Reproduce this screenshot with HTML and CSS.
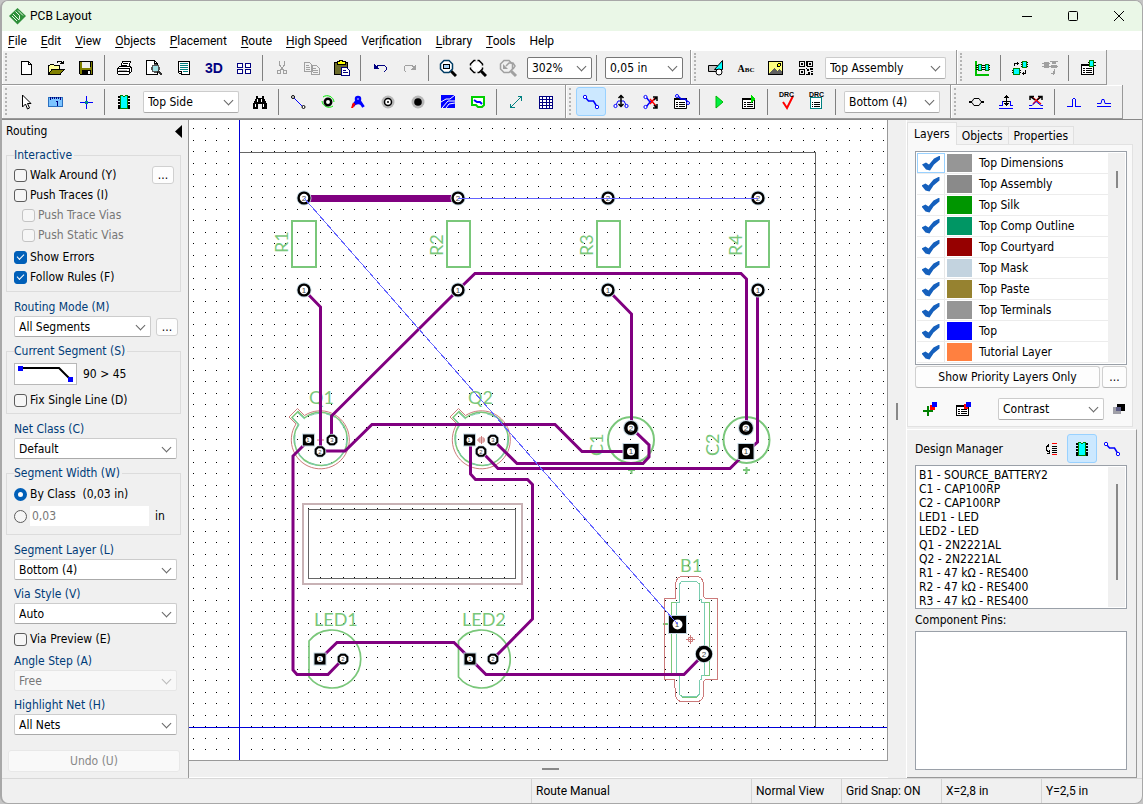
FILE: index.html
```html
<!DOCTYPE html>
<html lang="en">
<head>
<meta charset="utf-8">
<title>PCB Layout</title>
<link rel="stylesheet" href="styles.css">
</head>
<body>
<svg class="defs" aria-hidden="true">
  <symbol id="i-chip" viewBox="0 0 16 16"><path d="M2 2.500h12M2 5.500h12M2 8.500h12M2 11.500h12M2 13.500h12" stroke="#000" stroke-width="2"/><path d="M4.500 1.500h2l1 1h1l1-1h2v13h-7z" fill="#0ff" stroke="#008000"/></symbol>
  <symbol id="i-route" viewBox="0 0 16 16"><path d="M2.500 3.500l3 3.500h5l3 5" fill="none" stroke="#00f" stroke-width="1.500"/><circle cx="2" cy="3" r="1.700" fill="#fff" stroke="#00f"/><circle cx="14" cy="13" r="1.700" fill="#fff" stroke="#00f"/></symbol>
  <symbol id="i-list" viewBox="0 0 16 16"><path d="M1.500 4.500h12v10h-12z" fill="#fff" stroke="#000"/><path d="M1 5h13" stroke="#000" stroke-width="2"/><path d="M3 8.500h2m1 0h6M3 10.500h2m1 0h6M3 12.500h2m1 0h6" stroke="#000"/></symbol>
  <symbol id="i-lens" viewBox="0 0 18 18"><path d="M12 12l5 5" stroke="#000" stroke-width="3"/><path d="M5 1.500h5l3.500 3.500v5L10 13.500H5L1.500 10V5z" fill="#fff" stroke="currentColor" stroke-width="1.500"/></symbol>
</svg>
<div class="window">
  <header class="titlebar">
    <svg class="logo" width="17" height="17" viewBox="0 0 17 17"><path d="M8.500 0L17 8l-8.500 8.500L0 8z" fill="#2f8f3a"/><path d="M4 6l6 6M6.500 3.500l4 4 0 4M9 2.500l5 5M3 8l5 5" stroke="#e8f7e5" fill="none"/></svg>
    <h1>PCB Layout</h1>
    <div class="winbtns">
      <button aria-label="Minimize"><svg width="12" height="12"><path d="M1 6.500h10" stroke="#000"/></svg></button>
      <button aria-label="Maximize"><svg width="12" height="12"><rect x="1.500" y="1.500" width="9" height="9" rx="1" fill="none" stroke="#000"/></svg></button>
      <button aria-label="Close"><svg width="12" height="12"><path d="M1 1l10 10M11 1L1 11" stroke="#000"/></svg></button>
    </div>
  </header>
  <nav class="menu">
    <button><u>F</u>ile</button><button><u>E</u>dit</button><button><u>V</u>iew</button><button><u>O</u>bjects</button><button><u>P</u>lacement</button><button><u>R</u>oute</button><button><u>H</u>igh Speed</button><button>Ver<u>i</u>fication</button><button><u>L</u>ibrary</button><button><u>T</u>ools</button><button>Help</button>
  </nav>

  <div class="toolrow first">
    <div class="band">
      <button aria-label="New"><svg class="ic" viewBox="0 0 16 16"><path d="M3.500 1.500h7l3 3v10h-10z" fill="#fff" stroke="#000"/><path d="M10.500 1.500v3h3" fill="none" stroke="#000"/></svg></button>
      <button aria-label="Open"><svg class="ic" viewBox="0 0 16 16"><path d="M.5 14V5.500h1l1-1h3l1 1h5V9" fill="#ffff9c" stroke="#000"/><path d="M.5 14.500l3.500-5h12l-4 5z" fill="#808000" stroke="#000"/><path d="M9 2.500l1-1h3l2 2m0-3v3h-3" fill="none" stroke="#000"/></svg></button>
      <button aria-label="Save"><svg class="ic" viewBox="0 0 16 16"><path d="M1.500 1.500h13v13h-12l-1-1z" fill="#808000" stroke="#000"/><path d="M4 2h8v6H4z" fill="#f0f0f0"/><path d="M4 10h9v5H4z" fill="#000"/><path d="M10 11h2v3h-2z" fill="#f0f0f0"/><path d="M12.500 2v5" stroke="#000"/></svg></button>
      <i class="sep"></i>
      <button aria-label="Print"><svg class="ic" viewBox="0 0 16 16"><path d="M4.500 7.500l2-6h8l-2 6" fill="#fff" stroke="#000"/><path d="M7 3.500h5M6 5.500h5" stroke="#000"/><path d="M1.500 8.500l2-2h11l1 1v4l-3 3h-10l-1-1z" fill="#fff" stroke="#000"/><path d="M2 8.500h11v5M2 11.500h11M13 9l2-2" fill="none" stroke="#000"/><path d="M3 10.500h8" stroke="#aaa"/></svg></button>
      <button aria-label="Preview"><svg class="ic" viewBox="0 0 16 16"><path d="M.5.5h8l3 3v11H.5z" fill="#fff" stroke="#000"/><path d="M8.500.5v3h3" fill="none" stroke="#000"/><circle cx="9.500" cy="8.500" r="3.500" fill="#9fe0e4" stroke="#555" stroke-width="1.500"/><path d="M12 11l4 4" stroke="#333" stroke-width="2.500"/></svg></button>
      <button aria-label="Report"><svg class="ic" viewBox="0 0 16 16"><path d="M2.500 1.500h11v13h-8l-3-2z" fill="#fff" stroke="#000"/><path d="M4 3.500h8M4 5.500h8M4 7.500h8M4 9.500h8M7 11.500h5" stroke="#008080"/><path d="M2.500 11.500h3v3" fill="none" stroke="#000"/></svg></button>
      <button class="b3d">3D</button>
      <button aria-label="Tile"><svg class="ic" viewBox="0 0 16 16"><path d="M1.500 3.500h5v4h-5zM9.500 3.500h5v4h-5zM1.500 9.500h5v4h-5zM9.500 9.500h5v4h-5z" fill="#fff" stroke="#000080"/></svg></button>
      <i class="sep"></i>
      <button aria-label="Cut"><svg class="ic" viewBox="0 0 16 16"><path d="M5.500 1v4l4 5M10.500 1v4l-4 5" fill="none" stroke="#a0a0a0"/><circle cx="5" cy="12" r="2" fill="none" stroke="#a0a0a0"/><circle cx="11" cy="12" r="2" fill="none" stroke="#a0a0a0"/></svg></button>
      <button aria-label="Copy"><svg class="ic" viewBox="0 0 16 16"><path d="M.5 2.500h5l3 3v6h-8zM7.500 5.500h5l3 3v6h-8zM2 5.500h3M2 7.500h4M2 9.500h4M9 8.500h3M9 10.500h5M9 12.500h5" fill="none" stroke="#a0a0a0"/></svg></button>
      <button aria-label="Paste"><svg class="ic" viewBox="0 0 16 16"><path d="M.5 2.500h13v12H.5z" fill="#6b6b2a" stroke="#000"/><path d="M3 1.500h2L6 .5h2l1 1h2v3H3z" fill="#ff0" stroke="#000"/><path d="M7.500 7.500h5l3 3v5h-8z" fill="#fff" stroke="#000080"/><path d="M9 10.500h3M9 12.500h5" stroke="#000080"/></svg></button>
      <i class="sep"></i>
      <button aria-label="Undo"><svg class="ic" viewBox="0 0 16 16"><path d="M4 7l3-2h5l2 2v3l-2 2" fill="none" stroke="#000080"/><path d="M2 4v5h5z" fill="#000080"/></svg></button>
      <button aria-label="Redo"><svg class="ic" viewBox="0 0 16 16"><path d="M12 7L9 5H4L2 7v3l2 2" fill="none" stroke="#a0a0a0"/><path d="M14 4v6H8z" fill="#a0a0a0"/></svg></button>
      <i class="sep"></i>
      <button aria-label="Zoom window"><svg class="ic big smooth navy"><use href="#i-lens"/><rect x="4.500" y="5.500" width="6" height="4" fill="#a8d4f8" stroke="#000"/></svg></button>
      <button aria-label="Zoom all"><svg class="ic big smooth"><use href="#i-lens"/><path d="M7.500 0v16M0 7.500h15" stroke="#f0f0f0" stroke-width="2"/><path d="M4 4h7v7H4z" fill="#fff"/></svg></button>
      <button aria-label="Zoom previous"><svg class="ic big smooth" viewBox="0 0 18 18"><path d="M5 1.500h5l3.500 3.500v5L10 13.500H5L1.500 10V5z" fill="none" stroke="#a0a0a0" stroke-width="1.500"/><path d="M12 12l5 5" stroke="#a0a0a0" stroke-width="3"/><path d="M7 7l3-3h4l2 3-2 3" fill="none" stroke="#a0a0a0" stroke-width="1.500"/><path d="M4 5v5h5z" fill="#a0a0a0"/></svg></button>
      <span class="combo strong w64"><select aria-label="Zoom"><option>302%</option></select></span>
      <i class="sep"></i>
      <span class="combo strong w78"><select aria-label="Grid size"><option>0,05 in</option></select></span>
    </div>
    <div class="band">
      <button aria-label="Shapes"><svg class="ic smooth" viewBox="0 0 16 16"><path d="M.5 5.500h9v6h-9z" fill="#c0c0c0" stroke="#000"/><path d="M14.500.5v9h-8z" fill="#0ff" stroke="#000"/><circle cx="11" cy="12" r="3" fill="#fff" stroke="#000"/></svg></button>
      <button class="babc">Abc</button>
      <button aria-label="Picture"><svg class="ic" viewBox="0 0 16 16"><path d="M.5 1.500h14v13H.5z" fill="#ffff80" stroke="#000"/><path d="M1 13l5-5 3 3 2-2 3 3v2H1z" fill="#606060"/><circle cx="11" cy="5" r="1.500" fill="#ff0" stroke="#000"/></svg></button>
      <button aria-label="QR code"><svg class="ic" viewBox="0 0 16 16"><path d="M1.500 1.500h5v5h-5zM9.500 1.500h5v5h-5zM1.500 9.500h5v5h-5z" fill="none" stroke="#000"/><path d="M3 3h2v2H3zM11 3h2v2h-2zM3 11h2v2H3zM8 1h1v5H8zM9 9h2v2H9zM12 8h3v2h-3zM10 12h2v3h-2zM13 11h2v1h-2zM13 13h2v2h-2zM8 8h1v1H8zM8 14h2v1H8z"/></svg></button>
      <span class="combo w122"><select aria-label="Drawing layer"><option>Top Assembly</option></select></span>
    </div>
    <div class="band">
      <button aria-label="Align"><svg class="ic" viewBox="0 0 16 16"><path d="M1.500 1v13.500H15" fill="none" stroke="#00c000" stroke-width="2"/><path d="M2 5.500h14M2 7.500h14M2 9.500h14" stroke="#000"/><path d="M4.500 4.500h3v6h-3zM11.500 4.500h3v6h-3z" fill="#0ff" stroke="#008000"/></svg></button>
      <i class="sep"></i>
      <button aria-label="Auto place"><svg class="ic" viewBox="0 0 16 16"><path d="M0 10.500h9M0 12.500h9M9 2.500h7M9 4.500h7M9 6.500h7" stroke="#000"/><path d="M1.500 8.500h6v6h-6zM10.500 1.500h4v6h-4z" fill="#0ff" stroke="#008000"/><path d="M2.500 6V3.500h4M5.500 2v3M13.500 10v3H10M11 11.500v3" fill="none" stroke="#000"/></svg></button>
      <button aria-label="Unplace"><svg class="ic" viewBox="0 0 16 16"><path d="M2 2h5v6H2zM10 1h4v3h-4zM9 5h6v3H9z" fill="#a0a0a0"/><path d="M0 3.500h8M0 6.500h16M8 1.500h8M12.500 9v4H9M11 11v4" fill="none" stroke="#a0a0a0"/></svg></button>
      <i class="sep"></i>
      <button aria-label="Component list"><svg class="ic"><use href="#i-list"/><path d="M8 2.500h8M8 5.500h8" stroke="#000"/><path d="M9.500.5h4v6h-4z" fill="#0ff" stroke="#008000"/></svg></button>
    </div>
  </div>

  <div class="toolrow">
    <div class="band">
      <button aria-label="Select"><svg class="ic smooth" viewBox="0 0 16 16"><path d="M4.500 1v12l3-3 2 5 2-1-2-4.500h3.500z" fill="#fff" stroke="#000"/></svg></button>
      <button aria-label="Measure"><svg class="ic" viewBox="0 0 16 16"><path d="M.5 3.500h14v9H.5z" fill="#7cc4ff" stroke="#2a6fc0"/><path d="M2.500 3v3M4.500 3v2M6.500 3v2M8.500 3v2M10.500 3v2M12.500 3v3M8 7.500h1.500V12" fill="none" stroke="#000080"/></svg></button>
      <button aria-label="Origin"><svg class="ic" viewBox="0 0 16 16"><path d="M8.500 2v13M2 8.500h13" stroke="#00f"/><path d="M7 7h3v3H7z" fill="#088"/></svg></button>
      <i class="sep"></i>
      <button aria-label="Place component"><svg class="ic"><use href="#i-chip"/></svg></button>
      <span class="combo w96 tight"><select aria-label="Board side"><option>Top Side</option></select></span>
      <button aria-label="Find"><svg class="ic" viewBox="0 0 16 16"><path d="M4 2h2v2h4V2h2v2l3 6v5h-5v-5H6v5H1v-5l3-6z"/><path d="M5.500 5v3M9.500 5v3M3 9.500v3M11.500 9.500v3" stroke="#fff"/></svg></button>
      <i class="sep"></i>
      <button aria-label="Ratline"><svg class="ic smooth" viewBox="0 0 16 16"><path d="M3 3l10 10" stroke="#00f"/><circle cx="3" cy="3" r="1.500" fill="#fff" stroke="#000"/><circle cx="13.500" cy="13" r="1.500" fill="#fff" stroke="#000"/></svg></button>
      <button aria-label="Via"><svg class="ic smooth" viewBox="0 0 16 16"><path d="M3 3a7 7 0 0 1 11 5M13 12a7 7 0 0 1-11-5" fill="none" stroke="#0e0"/><circle cx="8" cy="8" r="3.200" fill="#fff" stroke="#000" stroke-width="2.500"/></svg></button>
      <button aria-label="Arc"><svg class="ic smooth" viewBox="0 0 16 16"><path d="M3 12L6.500 7M9.500 7l4 6M4.500 10c3-2 5-2 7 0" fill="none" stroke="#00f" stroke-width="3"/><circle cx="8" cy="5" r="2" fill="#fff" stroke="#00f" stroke-width="2.500"/><path d="M3 8.500l2.500 1.500L3 14H1z" fill="#f00"/></svg></button>
      <button aria-label="Pad"><svg class="ic smooth" viewBox="0 0 16 16"><circle cx="8" cy="8" r="6.500" fill="#b8b8b8"/><circle cx="8" cy="8" r="3.500" fill="#fff" stroke="#000" stroke-width="1.500"/><circle cx="8" cy="8" r="1"/></svg></button>
      <button aria-label="Mounting hole"><svg class="ic smooth" viewBox="0 0 16 16"><circle cx="8" cy="8" r="6.500" fill="#b8b8b8"/><circle cx="8" cy="8" r="3.800"/></svg></button>
      <button aria-label="Copper pour"><svg class="ic smooth" viewBox="0 0 16 16"><path d="M1 1h14v13H1z" fill="#00f"/><path d="M1 8l5-3h4l5-4M2 14l6-7h7M6 14l3-4 6-1" fill="none" stroke="#fff"/></svg></button>
      <button aria-label="Net region"><svg class="ic smooth" viewBox="0 0 16 16"><path d="M2 3h12v8l-2 2H8l-2-2H2z" fill="#fff" stroke="#00d000" stroke-width="2"/><path d="M4 6l3 2h3l2 2" stroke="#00f" stroke-width="2" fill="none"/></svg></button>
      <i class="sep"></i>
      <button aria-label="Dimension"><svg class="ic" viewBox="0 0 16 16"><path d="M2 14L14 2M2.500 10v3.500h4M10 2.500h3.500v4" fill="none" stroke="#008080"/></svg></button>
      <button aria-label="Table"><svg class="ic" viewBox="0 0 16 16"><path d="M1.500 2.500h13v12h-13zM1.500 5.500h13M1.500 8.500h13M1.500 11.500h13M4.500 2v12M8.500 2v12M11.500 2v12" fill="#fff" stroke="#000080"/></svg></button>
    </div>
    <div class="band">
      <button class="on" aria-label="Route manual"><svg class="ic smooth"><use href="#i-route"/></svg></button>
      <button aria-label="Edit traces"><svg class="ic smooth" viewBox="0 0 16 16"><path d="M3 11l2-4h6l2 4" fill="none" stroke="#00f"/><path d="M8 1v12M5.500 4L8 1.500 10.500 4M5.500 10L8 12.500l2.500-2.500" fill="none" stroke="#000" stroke-width="1.500"/><circle cx="2.500" cy="12" r="1.600" fill="#fff" stroke="#00f"/><circle cx="13.500" cy="12" r="1.600" fill="#fff" stroke="#00f"/></svg></button>
      <button aria-label="Free edit"><svg class="ic smooth" viewBox="0 0 16 16"><path d="M3 3l4 5h3M3 13l5-6" fill="none" stroke="#00f" stroke-width="1.500"/><path d="M7 5l6 7M12 4L7 10" stroke="#f00" stroke-width="1.500"/><path d="M10 3h4v4M14 10v4h-4M14 3l-3 3M14 14l-3-3" fill="none" stroke="#000" stroke-width="1.500"/><circle cx="2.500" cy="3" r="1.600" fill="#fff" stroke="#00f"/><circle cx="2.500" cy="13" r="1.600" fill="#fff" stroke="#00f"/></svg></button>
      <button aria-label="Net list"><svg class="ic smooth"><use href="#i-list"/><path d="M5 2l3 3h4l3 3" stroke="#00f" stroke-width="1.500" fill="none"/><circle cx="4" cy="2" r="1.500" fill="#fff" stroke="#00f"/><circle cx="15" cy="9" r="1.500" fill="#fff" stroke="#00f"/></svg></button>
      <i class="sep"></i>
      <button aria-label="Run autorouter"><svg class="ic smooth" viewBox="0 0 16 16"><path d="M5 2l7 6-7 6z" fill="#0e4" stroke="#0b0"/></svg></button>
      <button aria-label="Autorouter setup"><svg class="ic"><use href="#i-list"/><path d="M10 1l5 4-5 4z" fill="#0d0"/></svg></button>
      <i class="sep"></i>
      <button class="drc" aria-label="Check DRC"><span>DRC</span><svg class="ic smooth" viewBox="0 0 16 16"><path d="M4 8l4 6 6-12" fill="none" stroke="#f00" stroke-width="2"/></svg></button>
      <button class="drc" aria-label="DRC report"><span>DRC</span><svg class="ic" viewBox="0 0 16 16"><path d="M1.500 3.500h11v11h-11z" fill="#fff" stroke="#008080"/><path d="M3 8.500h1m1 0h6M3 10.500h1m1 0h6M3 12.500h1m1 0h6" stroke="#000"/></svg></button>
      <i class="sep"></i>
      <span class="combo w96"><select aria-label="Active layer"><option>Bottom (4)</option></select></span>
    </div>
    <div class="band">
      <button aria-label="Differential pair"><svg class="ic smooth" viewBox="0 0 16 16"><path d="M1 7.500h3l2-3h5l2 3h3M1 8.500h3l2 3h5l2-3h3" fill="none" stroke="#000"/></svg></button>
      <button aria-label="Tune"><svg class="ic" viewBox="0 0 16 16"><path d="M8.500 2v8M4 7.500h9" fill="none" stroke="#000"/><path d="M8.500 1l3 3h-6zM8.500 12l3-3h-6z"/><path d="M1 11.500h3.500v-5M12.500 6.500v5H15M1 14.500h14" fill="none" stroke="#00f"/></svg></button>
      <button aria-label="Free tune"><svg class="ic smooth" viewBox="0 0 16 16"><path d="M4 3l9 7M12 3L5 10" stroke="#f00" stroke-width="1.500"/><path d="M2 6V2.500h4M10 2.500h4V6M3 3l4 3M13 3L9 6" fill="none" stroke="#000" stroke-width="1.500"/><path d="M1 11.500h3l4-4 5 4h2M1 14.500h14" fill="none" stroke="#00f"/></svg></button>
      <i class="sep"></i>
      <button aria-label="Meander"><svg class="ic" viewBox="0 0 16 16"><path d="M1 12.500h5.500v-7l1-1h1l1 1v7H15" fill="none" stroke="#00f"/></svg></button>
      <button aria-label="Phase"><svg class="ic smooth" viewBox="0 0 16 16"><path d="M1 9.500h4l1-4h2l1 4h6M1 12.500h14" fill="none" stroke="#00f"/></svg></button>
    </div>
  </div>

  <div class="work">
    <aside class="left">
      <div class="ptitle"><span>Routing</span><button aria-label="Collapse"><svg width="7" height="13"><path d="M7 0v13L0 6.500z"/></svg></button></div>
      <fieldset>
        <legend>Interactive</legend>
        <div class="line"><label class="opt"><input type="checkbox">Walk Around (Y)</label><button class="more">...</button></div>
        <label class="opt"><input type="checkbox">Push Traces (I)</label>
        <label class="opt sub"><input type="checkbox" disabled>Push Trace Vias</label>
        <label class="opt sub"><input type="checkbox" disabled>Push Static Vias</label>
        <label class="opt gap"><input type="checkbox" checked>Show Errors</label>
        <label class="opt"><input type="checkbox" checked>Follow Rules (F)</label>
      </fieldset>
      <div class="field after"><label for="mode">Routing Mode (M)</label>
        <div class="line"><span class="combo grow"><select id="mode"><option>All Segments</option></select></span><button class="more">...</button></div></div>
      <fieldset class="seg">
        <legend>Current Segment (S)</legend>
        <div class="shape"><svg width="63" height="22" viewBox="0 0 63 22"><rect x=".5" y=".5" width="62" height="21" fill="#fff" stroke="#b8b8b8"/><path d="M6 5h39l11 11" fill="none" stroke="#000" stroke-width="2"/><path d="M4 3h5v5H4zM54 14h5v5h-5z" fill="#00f"/></svg><span>90 &gt; 45</span></div>
        <label class="opt"><input type="checkbox">Fix Single Line (D)</label>
      </fieldset>
      <div class="field after"><label for="net">Net Class (C)</label><span class="combo"><select id="net"><option>Default</option></select></span></div>
      <fieldset class="width">
        <legend>Segment Width (W)</legend>
        <label class="opt"><input type="radio" name="w" checked>By Class&nbsp; (0,03 in)</label>
        <div class="opt own"><input type="radio" name="w" aria-label="Own width"><input class="txt" type="text" value="0,03" aria-label="Width" disabled><span>in</span></div>
      </fieldset>
      <div class="field after"><label for="sl">Segment Layer (L)</label><span class="combo"><select id="sl"><option>Bottom (4)</option></select></span></div>
      <div class="field"><label for="vs">Via Style (V)</label><span class="combo"><select id="vs"><option>Auto</option></select></span></div>
      <label class="opt solo"><input type="checkbox">Via Preview (E)</label>
      <div class="field"><label for="as">Angle Step (A)</label><span class="combo off"><select id="as" disabled><option>Free</option></select></span></div>
      <div class="field"><label for="hn">Highlight Net (H)</label><span class="combo"><select id="hn"><option>All Nets</option></select></span></div>
      <button class="undo" disabled>Undo (U)</button>
    </aside>

    <main class="centre">
      <svg class="board" role="img" aria-label="Circuit board">
        <defs>
          <pattern id="dots" x="239" y="128" width="23" height="23" patternUnits="userSpaceOnUse"><path d="M0 0h1v1H0zM12 0h1v1h-1zM0 12h1v1H0zM12 12h1v1h-1z"/></pattern>
          <g id="pad"><circle r="7.500" fill="#c4d6e0"/><circle r="5.400" fill="#fff" stroke="#000" stroke-width="2.400"/></g>
          <g id="padc"><circle r="8" fill="#c4d6e0"/><circle r="5.200" fill="#fff" stroke="#000" stroke-width="3.400"/></g>
          <g id="pads"><circle r="6.200" fill="#c4d6e0"/><path d="M-2-4.300h4l2.300 2.300v4l-2.300 2.300h-4l-2.300-2.300v-4z" fill="#fff" stroke="#000" stroke-width="2"/></g>
          <g id="sqs"><path d="M-6.500-6.500h13v13h-13z" fill="#c4d6e0"/><path d="M-5.500-5.500h11v11h-11z"/><circle r="3" fill="#fff"/></g>
          <g id="sqc"><path d="M-8.500-8.500h17v17h-17z" fill="#c4d6e0"/><path d="M-7.500-7.500h15v15h-15z"/><circle r="4" fill="#fff"/></g>
          <g id="to18"><path d="M-24-16l-7-7 8.500-8.500 7 7a29 29 0 1 1-8.500 8.500z" fill="none" stroke="#cc7a7a"/><path d="M-21.500-15.500l-6.500-7 6-6 6.500 6.500a26.500 26.500 0 1 1-6 6.500z" fill="none" stroke="#7ac77a" stroke-width="1.500"/><path d="M-21-15l-6-7 5-5 6.500 6a26 26 0 1 1-5.500 6z" fill="none" stroke="#7accb0" stroke-dasharray="9 7"/></g>
          <g id="to18p"><use href="#sqs" x="-11.500"/><use href="#pads" x="12"/><use href="#pads" y="11.500"/></g>
          <path id="led" d="M-22.500-18a29 29 0 1 1 0 36z" fill="none" stroke="#7ac77a" stroke-width="1.700"/>
        </defs>
        <g transform="translate(-189 -120)">
          <rect x="189" y="120" width="3000" height="2000" fill="url(#dots)"/>
          <g class="crisp" fill="none">
            <path d="M239.500 152.500h576v575" stroke="#666"/>
            <path d="M239.500 120v2000M189 727.500h3000" stroke="#0000d8"/>
            <path d="M303 503.500h219v80H303z" stroke="#c8b2b5" stroke-width="2"/>
            <path d="M308.500 509.500h207v69h-207z" stroke="#666"/>
          </g>
          <g class="names">
            <text transform="translate(288 253) rotate(-90)">R1</text><text transform="translate(443 256) rotate(-90)">R2</text><text transform="translate(593 256) rotate(-90)">R3</text><text transform="translate(742 256) rotate(-90)">R4</text>
            <text transform="translate(603 456) rotate(-90)">C1</text><text transform="translate(719 456) rotate(-90)">C2</text>
            <text x="309" y="404">Q1</text><text x="468" y="404">Q2</text><text x="314" y="626">LED1</text><text x="462" y="626">LED2</text><text x="680" y="572">B1</text>
          </g>
          <g fill="none" stroke="#7ac77a" stroke-width="2">
            <path class="crisp" d="M292 221h24v46h-24zM447 221h23v46h-23zM597 221h23v46h-23zM746 221h23v46h-23z"/>
            <circle cx="631" cy="440" r="23"/><circle cx="746.500" cy="440" r="23"/>
            <path d="M628 470h7M631.500 467v7M743 470h7M746.500 467v7M663 624h5"/>
          </g>
          <use href="#to18" x="320" y="440"/><use href="#to18" x="481" y="440"/>
          <path d="M317 440h7M477 440h8M481.500 436v8M479 438h5v4h-5zM686 639.500h9M690.500 635v9M688.500 637.500h4v4h-4z" stroke="#cc7a7a" fill="none"/>
          <use href="#led" x="331.500" y="659"/><use href="#led" x="481" y="659"/>
          <g class="crisp" fill="none">
            <path d="M679.500 602.500h-8v72.500M699.500 583v15M704 602.500h5.500v73H704M699.500 681v13l-3 3h-14l-2-2" stroke="#7ac77a"/>
            <path d="M676.500 602.500h3V584l2-2.500h15l2.500 2.500v15l2.500 1v2.500h3v73h-3v4l-2.500 1v14l-2.500 2h-15l-2-2V675h-3z" stroke="#7accb0"/>
            <path d="M664.500 598.500h11v-15q1-7 7-7h14q6 0 7 7v13l2 2h12v81h-12l-2 2v14q-1 6-7 6h-14q-6 0-7-6l-1-16h-10z" stroke="#cc7a7a"/>
          </g>
          <g fill="none" stroke="#800080" stroke-width="3">
            <path d="M304 198.500h154" stroke-width="7"/>
            <path d="M304 290l16.500 17v144h24.500l27-26.500h183l27 27h49M458 290L331.500 416v24M458 290l17-16.500h266l5.500 5.500v149M608 290l23.500 24v114l17.500 17v12l-6 6.500H517L493 440M757.500 290v152l-11 10-16.500 16.500H498L481 451M470.500 440v34l5 5.500h52l5 5v134.500L493 659M309 440l-16 16v214l4 4.500h31l15-15.500M320 659l17-16.500h117l32 32h198l20-20.500"/>
          </g>
          <use href="#pad" x="304" y="198"/><use href="#pad" x="458" y="198"/><use href="#pad" x="608" y="198"/><use href="#pad" x="758" y="198"/>
          <use href="#pad" x="304" y="290"/><use href="#pad" x="458" y="290"/><use href="#pad" x="608" y="290"/><use href="#pad" x="758" y="290"/>
          <use href="#to18p" x="320" y="440"/><use href="#to18p" x="481" y="440"/>
          <use href="#padc" x="631" y="428"/><use href="#padc" x="746" y="428"/><use href="#sqc" x="631" y="451.500"/><use href="#sqc" x="746" y="451.500"/>
          <use href="#sqs" x="320" y="659"/><use href="#pads" x="343" y="659"/><use href="#sqs" x="470" y="659"/><use href="#pads" x="493" y="659"/>
          <path d="M668 615h19v19h-19z" fill="#c4d6e0"/><path d="M669 616h17v17h-17z"/><circle cx="677.500" cy="624.500" r="5" fill="#fff"/>
          <circle cx="704" cy="654" r="9" fill="#c4d6e0"/><circle cx="704" cy="654" r="6.500" fill="#fff" stroke="#000" stroke-width="3.500"/>
          <g class="pins">
            <text x="304" y="201">2</text><text x="458" y="201">2</text><text x="608" y="201">2</text><text x="758" y="201">2</text>
            <text x="304" y="293">1</text><text x="458" y="293">1</text><text x="608" y="293">1</text><text x="758" y="293">1</text>
            <text x="631" y="431">2</text><text x="746" y="431">2</text><text x="631" y="454">1</text><text x="746" y="454">1</text><text x="677" y="627">1</text><text x="704" y="657">2</text>
          </g>
          <g class="pins tiny">
            <text x="308" y="442">1</text><text x="332" y="442">3</text><text x="320" y="454">2</text><text x="469" y="442">1</text><text x="493" y="442">3</text><text x="481" y="454">2</text>
            <text x="320" y="661">1</text><text x="343" y="661">2</text><text x="470" y="661">1</text><text x="493" y="661">2</text>
          </g>
          <path d="M304 198l373.500 426M458 198.500h300" stroke="#6464ff" fill="none" class="crisp"/>
        </g>
      </svg>
      <div class="hsplit"><i></i></div>
    </main>
    <div class="vsplit"><i></i></div>

    <aside class="right">
      <div class="tabs" role="tablist"><button role="tab" class="sel" aria-selected="true">Layers</button><button role="tab">Objects</button><button role="tab">Properties</button></div>
      <section class="layers">
        <div class="box">
          <ul>
            <li><label><input type="checkbox" checked><i class="c-gray"></i><span>Top Dimensions</span></label></li>
            <li><label><input type="checkbox" checked><i class="c-dark"></i><span>Top Assembly</span></label></li>
            <li><label><input type="checkbox" checked><i class="c-green"></i><span>Top Silk</span></label></li>
            <li><label><input type="checkbox" checked><i class="c-teal"></i><span>Top Comp Outline</span></label></li>
            <li><label><input type="checkbox" checked><i class="c-red"></i><span>Top Courtyard</span></label></li>
            <li><label><input type="checkbox" checked><i class="c-mask"></i><span>Top Mask</span></label></li>
            <li><label><input type="checkbox" checked><i class="c-paste"></i><span>Top Paste</span></label></li>
            <li><label><input type="checkbox" checked><i class="c-gray"></i><span>Top Terminals</span></label></li>
            <li><label><input type="checkbox" checked><i class="c-blue"></i><span>Top</span></label></li>
            <li><label><input type="checkbox" checked><i class="c-orange"></i><span>Tutorial Layer</span></label></li>
          </ul>
          <div class="track"><i></i></div>
        </div>
        <div class="prio"><button class="wide">Show Priority Layers Only</button><button class="dots">...</button></div>
        <div class="modes">
          <button aria-label="Add layer"><svg class="ic" viewBox="0 0 16 16"><path d="M6 5v10M1 10h10" stroke="#008000" stroke-width="2"/><path d="M8 4h5v5H8z" fill="#f00"/><path d="M10 1h5v5h-5z" fill="#00f"/></svg></button>
          <button aria-label="Layer setup"><svg class="ic"><use href="#i-list"/><path d="M9 3h4v5H9z" fill="#f00"/><path d="M11 1h5v5h-5z" fill="#00f"/></svg></button>
          <span class="combo grow"><select aria-label="Display mode"><option>Contrast</option></select></span>
          <button class="slim" aria-label="Contrast"><svg width="12" height="12"><path d="M4 1h8v7H4z"/><path d="M0 4h8v7H0z" fill="#a0a0a8"/><path d="M3 4h5v4H3z" fill="#606088"/></svg></button>
        </div>
      </section>
      <section class="manager">
        <div class="mhead"><h2>Design Manager</h2>
          <button aria-label="Sort"><svg class="ic" viewBox="0 0 16 16"><path d="M8 2.500h5M8 13.500h5" stroke="#f00"/><path d="M8 5.500h5M8 7.500h5M8 9.500h5M8 11.500h5M5 4.500H3.500v1H2.500v4h1v1H5M4.500 3v3M5.500 9v4M3 12.500h3" fill="none" stroke="#000"/></svg></button>
          <button class="on" aria-label="Components"><svg class="ic"><use href="#i-chip"/></svg></button>
          <button aria-label="Nets"><svg class="ic smooth"><use href="#i-route"/></svg></button></div>
        <div class="box parts">
          <ul role="listbox" aria-label="Components"><li>B1 - SOURCE_BATTERY2</li><li>C1 - CAP100RP</li><li>C2 - CAP100RP</li><li>LED1 - LED</li><li>LED2 - LED</li><li>Q1 - 2N2221AL</li><li>Q2 - 2N2221AL</li><li>R1 - 47 kΩ - RES400</li><li>R2 - 47 kΩ - RES400</li><li>R3 - 47 kΩ - RES400</li></ul>
          <div class="track"><i></i></div>
        </div>
        <h3>Component Pins:</h3>
        <div class="box pinsbox"></div>
      </section>
    </aside>
  </div>
  <footer class="status"><span></span><span class="s220">Route Manual</span><span class="s90">Normal View</span><span class="s100">Grid Snap: ON</span><span class="s100">X=2,8 in</span><span class="s100">Y=2,5 in</span></footer>
</div>
</body>
</html>
```
FILE: styles.css
```css
* { box-sizing: border-box; }
body { margin: 0; background: #c4c4c4; font: 12px/16px "DejaVu Sans Condensed", "Noto Sans", sans-serif; color: #000; }
button, select, input { font: inherit; color: inherit; margin: 0; padding: 0; }
button { border: 0; background: none; display: flex; align-items: center; justify-content: center; }
ul { list-style: none; margin: 0; padding: 0; }
h1, h2, h3 { font: inherit; margin: 0; }
.defs { position: absolute; width: 0; height: 0; }
.window { height: 100vh; min-height: 804px; display: flex; flex-direction: column; background: #f0f0f0; border: 1px solid #a8a8a8; border-left-width: 2px; border-radius: 8px; overflow: hidden; }

.titlebar { display: flex; align-items: center; flex: none; height: 30px; background: #eaf7e7; padding-left: 7px; font-family: Roboto, sans-serif; }
.titlebar h1 { flex: 1; padding-left: 4px; }
.winbtns { display: flex; }
.winbtns button { width: 46px; height: 30px; }
.menu { display: flex; flex: none; height: 19px; padding: 1px 0 0 0; background: #fff; font-family: Roboto, sans-serif; }
.menu button { padding: 0 7px; display: block; line-height: 18px; }
.menu button:first-child { padding-left: 6px; }
.menu u { text-underline-offset: 2px; }

.toolrow { display: flex; flex: none; height: 34px; }
.toolrow.first { height: 35px; }
.toolrow.first .band { padding-top: 2px; }
.band { display: flex; align-items: center; padding: 0 6px 0 9px; border-right: 1px solid #999; border-bottom: 1px solid #999; box-shadow: inset 1px 1px #fff; position: relative; }
.band::before { content: ""; position: absolute; left: 3px; top: 3px; bottom: 3px; border-left: 2px dotted #b4b4b4; }
.band + .band { padding-left: 10px; }
.band:last-child { padding-right: 3px; }
.toolrow:not(.first) .band:first-child { padding-right: 4px; }
.band button, .mhead button, .modes button { width: 30px; height: 29px; flex: none; border-radius: 3px; }
.ic { width: 16px; height: 16px; shape-rendering: crispEdges; overflow: visible; }
.ic.big { width: 18px; height: 18px; }
.ic.smooth { shape-rendering: auto; }
.navy { color: #003c64; }
button.on { background: #cce8ff; border: 1px solid #99d1ff; }
.sep { width: 8px; flex: none; height: 26px; display: flex; }
.sep::before { content: ""; width: 1px; margin-left: 3px; background: #808080; }
.b3d { font: bold 14px "Liberation Sans", sans-serif; color: #000080; }
.babc { font: bold 10px "Liberation Serif", serif; font-variant: small-caps; }
.drc { position: relative; }
.drc span { position: absolute; left: 7px; top: 4px; font: bold 7px/8px "Liberation Sans", sans-serif; z-index: 1; }

.combo { display: flex; position: relative; height: 22px; }
.combo select { appearance: none; flex: 1; width: 100%; height: 22px; padding: 0 18px 0 4px; background: #fff; border: 1px solid #ccc; border-bottom-color: #aaa; border-radius: 2px; }
.combo.strong select { border-color: #777; }
.combo::after { content: ""; position: absolute; right: 7px; top: 6px; width: 6px; height: 6px; border: solid #666; border-width: 0 1px 1px 0; transform: rotate(45deg); pointer-events: none; }
.combo.off::after { border-color: #bbb; }
.combo.off select { background: #f8f8f8; border-color: #e6e6e6; color: #777; opacity: 1; }
.band .combo { margin: 0 4px; flex: none; }
.band .combo.strong { margin-left: 4px; margin-right: 1px; }
.band .combo.tight { margin-right: 6px; }
.w64 { width: 65px; } .w78 { width: 78px; } .w96 { width: 96px; } .w122 { width: 121px; }
.grow { flex: 1; }

.work { flex: 1; display: flex; min-height: 0; border-top: 1px solid #888; }
.left { width: 187px; flex: none; border-right: 1px solid #999; padding: 0 7px 0 4px; display: flex; flex-direction: column; }
.ptitle { display: flex; justify-content: space-between; align-items: center; height: 22px; margin: 0 -1px 5px 0; }
fieldset { margin: 0; padding: 2px 7px 4px; border: 1px solid #dcdcdc; min-width: 0; }
legend { padding: 0 2px 0 0; color: #003c78; }
.line { display: flex; justify-content: space-between; align-items: center; }
.opt { display: flex; align-items: center; height: 20px; gap: 3px; }
.opt.sub { margin-left: 8px; color: #777; }
.opt.gap { margin-top: 2px; }
.opt input:not(.txt) { appearance: none; flex: none; width: 13px; height: 13px; border: 1px solid #5c5c5c; border-radius: 3px; background: #f6f6f6; display: grid; place-items: center; }
.opt input:disabled:not(.txt) { border-color: #c4c4c4; }
.opt input[type=radio]:not(.txt) { border-radius: 50%; }
.opt input[type=checkbox]:checked { background: #005fb8; border-color: #005fb8; }
.opt input[type=checkbox]:checked::before { content: ""; width: 6px; height: 3px; border: solid #fff; border-width: 0 0 1px 1px; transform: rotate(-45deg); margin-bottom: 2px; }
.opt input[type=radio]:checked:not(.txt) { border: 4px solid #005fb8; background: #fff; }
.more { width: 22px; height: 18px; background: #fdfdfd; border: 1px solid #d0d0d0; border-radius: 3px; }
fieldset .more { margin-right: -1px; }
.field { display: flex; flex-direction: column; gap: 1px; margin: 5px 4px 0 8px; }
.field.after { margin-top: 7px; }
.field label { color: #003c78; }
.field .line { gap: 5px; margin-right: -1px; }
.field .combo { height: 21px; margin-bottom: 1px; }
.field .combo select { height: 21px; }
.seg { margin-top: 5px; padding: 4px 7px 3px; }
.shape { display: flex; align-items: center; gap: 6px; height: 22px; margin-bottom: 5px; }
.width { margin-top: 5px; padding: 3px 7px 8px; }
.own { margin-top: 2px; }
.txt { width: 119px; height: 20px; border: 0; background: #fff; padding: 0 2px; color: #777; }
.own span { margin-left: 3px; }
.solo { margin: 4px 0 -1px 8px; }
.undo { height: 22px; margin: 14px 1px 0 2px; border: 1px solid #e8e8e8; border-radius: 3px; background: #f9f9f9; color: #888; flex: none; }

.centre { flex: 1; min-width: 0; display: flex; flex-direction: column; }
.board { flex: 1; width: 100%; min-height: 0; background: #fff; overflow: hidden; border-right: 1px solid #999; border-bottom: 1px solid #999; }
.crisp { shape-rendering: crispEdges; }
.names { font: 18px Lato, sans-serif; fill: #7ac77a; }
.pins { font: 8px "Liberation Sans", sans-serif; text-anchor: middle; fill: #444; }
.tiny { font-size: 6px; }
.hsplit { height: 17px; flex: none; display: flex; align-items: center; justify-content: center; border-bottom: 1px solid #fff; }
.hsplit i { width: 17px; height: 2px; background: #888; margin-left: 24px; }
.vsplit { width: 19px; flex: none; display: flex; align-items: center; justify-content: center; border-right: 1px solid #fff; }
.vsplit i { width: 2px; height: 17px; background: #888; margin-top: -76px; }

.right { width: 230px; flex: none; margin-right: 5px; display: flex; flex-direction: column; }
.tabs { display: flex; align-items: flex-end; height: 25px; flex: none; margin-bottom: -1px; }
.tabs button { height: 19px; padding: 0 5px; border: 1px solid #e0e0e0; border-left: 0; background: #f3f3f3; }
.tabs .sel { height: 23px; padding: 0 6px; background: #f9f9f9; border-left: 1px solid #e0e0e0; border-bottom: 0; position: relative; }
.layers { background: #f9f9f9; border: 1px solid #e2e2e2; margin-right: 4px; padding: 6px 5px 3px 7px; }
.box { display: flex; background: #fff; border: 1px solid #9aa0a8; padding: 1px; }
.box ul { flex: 1; }
.layers .box { height: 214px; }
.layers li label { display: flex; align-items: center; height: 21px; border-bottom: 1px solid #ececec; }
.layers li input { appearance: none; width: 28px; height: 20px; display: grid; place-items: center; border-right: 1px solid #e8e8e8; }
.layers li:first-child input { border: 1px solid #99d1ff; }
.layers li input::before { content: ""; width: 18px; height: 15px; background: #1560bd; clip-path: polygon(0 9px, 4px 7px, 7px 9px, 12px 3px, 18px 0, 18px 4px, 12px 9px, 8px 15px, 4px 14px); }
.layers li i { width: 25px; height: 18px; margin-left: 2px; }
.layers li span { padding-left: 7px; }
.c-gray { background: #969696; } .c-dark { background: #8a8a8a; } .c-green { background: #009600; } .c-teal { background: #009664; } .c-red { background: #960000; }
.c-mask { background: #c3d3df; } .c-paste { background: #968230; } .c-blue { background: #00f; } .c-orange { background: #ff8040; }
.track { width: 17px; background: #f0f0f0; padding: 18px 0 0 8px; }
.track i { display: block; width: 2px; height: 17px; background: #888; }
.prio { display: flex; gap: 2px; margin-top: 1px; }
.prio button { height: 22px; border: 1px solid #d0d0d0; border-bottom-color: #b8b8b8; border-radius: 3px; background: #fdfdfd; }
.prio .wide { flex: 1; } .prio .dots { width: 25px; }
.modes { display: flex; align-items: center; margin-top: 6px; }
.modes button + button { margin-left: 3px; }
.modes .combo { margin: 0 7px 0 20px; }
.modes .slim { width: 16px; }
.manager { flex: 1; display: flex; flex-direction: column; margin-top: 2px; padding: 4px 9px 7px 8px; border-right: 1px solid #999; border-bottom: 1px solid #999; border-top: 1px solid #fff; min-height: 0; }
.mhead { display: flex; align-items: center; height: 29px; margin-bottom: 2px; }
.mhead h2 { flex: 1; }
.parts { height: 144px; flex: none; line-height: 14px; padding-left: 3px; overflow: hidden; }
.parts ul { padding-top: 1px; }
.parts .track { padding-top: 17px; }
.parts .track i { height: 96px; }
.manager h3 { height: 22px; line-height: 22px; }
.pinsbox { flex: 1; }

.status { display: flex; flex: none; height: 25px; border-top: 1px solid #d8d8d8; font-family: Roboto, sans-serif; line-height: 25px; }
.status span { flex: none; border-left: 1px solid #d4d4d4; padding-left: 4px; }
.status span:first-child { flex: 1; border: 0; }
.status .s220 { width: 220px; } .status .s90 { width: 90px; } .status .s100 { width: 100px; }
.status span:last-child { width: 101px; }
```
